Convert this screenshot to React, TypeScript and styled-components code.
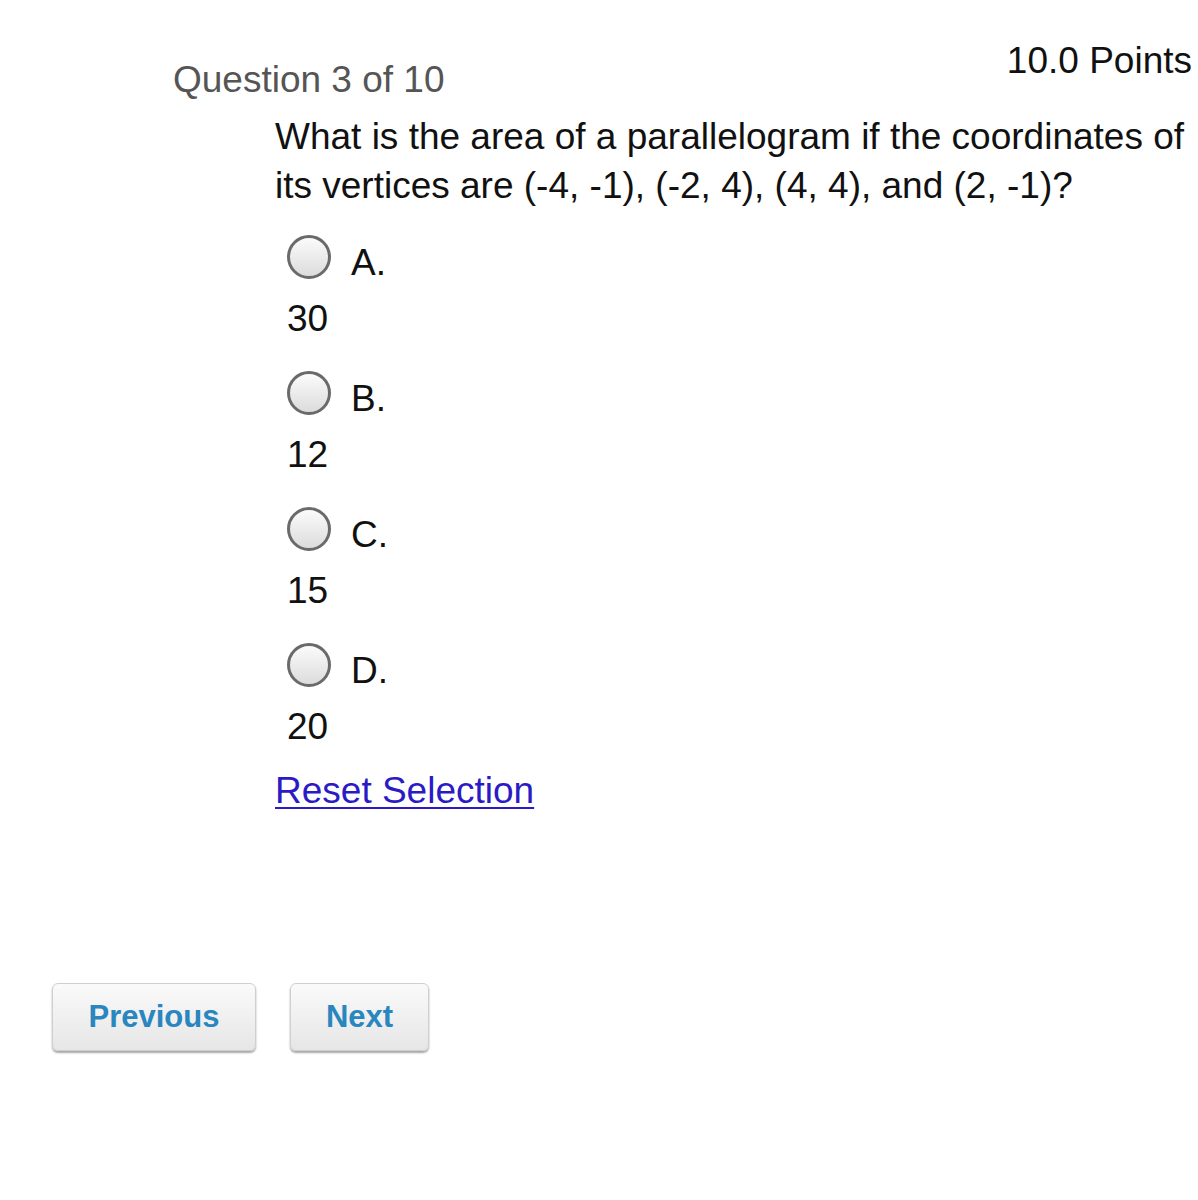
import React from "react";
import styled, { createGlobalStyle } from "styled-components";

const GlobalStyle = createGlobalStyle`
  html, body {
    margin: 0;
    padding: 0;
    background: #ffffff;
    overflow-x: hidden;
  }
  body {
    font-family: "Liberation Sans", Arial, Helvetica, sans-serif;
    font-size: 37px;
    line-height: 49px;
    color: #111;
  }
`;

const Page = styled.div`
  width: 1198px;
  height: 1200px;
  overflow: hidden;
  padding-top: 36px;
  box-sizing: border-box;
`;

const Header = styled.div`
  display: flex;
  justify-content: space-between;
  align-items: flex-start;
  padding-left: 173px;
  padding-right: 6px;
`;

const QuestionNumber = styled.div`
  margin-top: 19px;
  color: #555555;
`;

const Points = styled.div`
  color: #111;
`;

const Body = styled.div`
  padding-left: 275px;
  margin-top: 8px;
`;

const QuestionText = styled.div`
  width: 930px;
  margin-bottom: 25px;
`;

const Option = styled.div`
  padding-left: 12px;
  margin-bottom: 28px;
`;

const OptionRow = styled.label`
  display: flex;
  align-items: flex-start;
  gap: 20px;
`;

const Radio = styled.span`
  width: 44px;
  height: 44px;
  box-sizing: border-box;
  border-radius: 50%;
  border: 3px solid #6a6a6a;
  background: linear-gradient(#fbfbfb, #dcdcdc);
  flex-shrink: 0;
`;

const Letter = styled.span`
  margin-top: 3px;
`;

const AnswerText = styled.div`
  margin-top: 7px;
`;

const ResetRow = styled.div`
  margin-top: -13px;
`;

const ResetLink = styled.a`
  color: #2a1bc4;
  text-decoration: underline;
  text-underline-offset: 4px;
  text-decoration-thickness: 2px;
  cursor: pointer;
`;

const Nav = styled.div`
  display: flex;
  gap: 34px;
  padding-left: 52px;
  margin-top: 168px;
`;

const NavButton = styled.button<{ $width: number }>`
  width: ${(p) => p.$width}px;
  height: 68px;
  border: 1px solid #cfcfcf;
  border-radius: 6px;
  background: linear-gradient(#fafafa, #e6e6e6);
  box-shadow: 0 2px 2px rgba(0, 0, 0, 0.35);
  font-family: "Liberation Sans", Arial, Helvetica, sans-serif;
  font-size: 31px;
  font-weight: 700;
  color: #2a86be;
  padding: 0;
  cursor: pointer;
`;

const options = [
  { letter: "A.", value: "30" },
  { letter: "B.", value: "12" },
  { letter: "C.", value: "15" },
  { letter: "D.", value: "20" },
];

export default function App() {
  return (
    <Page>
      <GlobalStyle />
      <Header>
        <QuestionNumber>Question 3 of 10</QuestionNumber>
        <Points>10.0 Points</Points>
      </Header>
      <Body>
        <QuestionText>
          What is the area of a parallelogram if the coordinates of its
          vertices are (-4, -1), (-2, 4), (4, 4), and (2, -1)?
        </QuestionText>
        {options.map((o) => (
          <Option key={o.letter}>
            <OptionRow>
              <Radio />
              <Letter>{o.letter}</Letter>
            </OptionRow>
            <AnswerText>{o.value}</AnswerText>
          </Option>
        ))}
        <ResetRow>
          <ResetLink>Reset Selection</ResetLink>
        </ResetRow>
      </Body>
      <Nav>
        <NavButton $width={204}>Previous</NavButton>
        <NavButton $width={139}>Next</NavButton>
      </Nav>
    </Page>
  );
}
